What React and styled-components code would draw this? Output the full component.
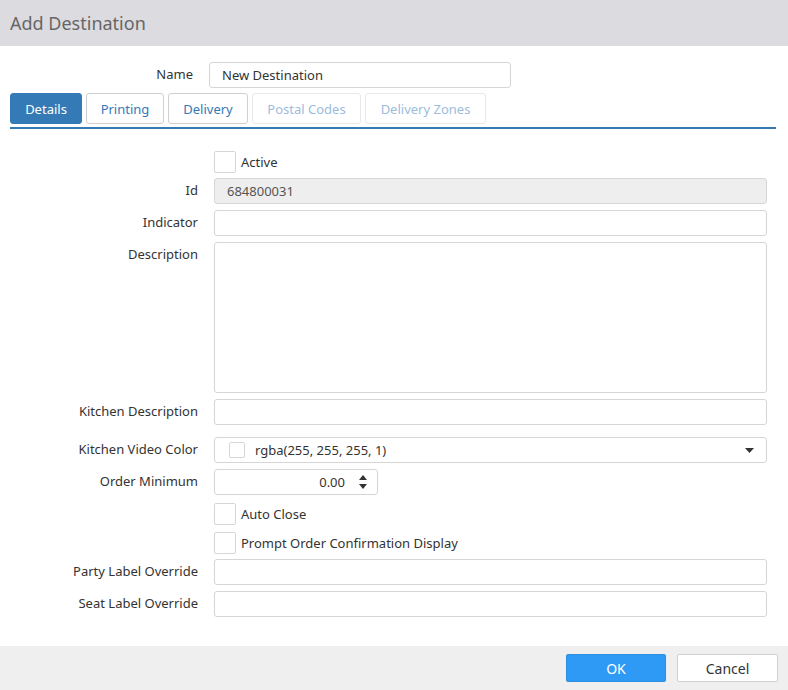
import React from 'react';
import styled, { createGlobalStyle } from 'styled-components';

const Global = createGlobalStyle`
  body { margin: 0; font-family: "Noto Sans", "Open Sans", sans-serif; background: #fff; }
`;

const Dialog = styled.div`
  width: 788px;
  height: 690px;
  display: flex;
  flex-direction: column;
  color: #333;
  font-size: 13px;
`;

const Header = styled.div`
  height: 46px;
  background: #dcdbe0;
  display: flex;
  align-items: center;
  padding-left: 10px;
  font-size: 18px;
  color: #666;
`;

const Body = styled.div`
  flex: 1;
  padding: 16px 12px 0 10px;
`;

const NameRow = styled.div`
  display: flex;
  align-items: flex-start;
  gap: 16px;
`;

const NameLabel = styled.div`
  width: 183px;
  text-align: right;
  padding-top: 3px;
`;

const Input = styled.div`
  box-sizing: border-box;
  height: ${p => p.$h || 26}px;
  width: ${p => p.$w ? p.$w + 'px' : '100%'};
  border: 1px solid #d6d6d6;
  border-radius: 3px;
  background: ${p => p.$disabled ? '#eeeeee' : '#fff'};
  color: ${p => p.$disabled ? '#555' : '#333'};
  display: flex;
  align-items: center;
  padding: 0 12px;
  gap: 10px;
`;

const Tabs = styled.div`
  display: flex;
  gap: 4px;
  margin-top: 5px;
  padding-bottom: 3px;
  border-bottom: 2px solid #337ab7;
  width: 766px;
`;

const Tab = styled.div`
  box-sizing: border-box;
  height: 31px;
  width: ${p => p.$w}px;
  display: flex;
  align-items: center;
  justify-content: center;
  border-radius: 3px;
  border: 1px solid ${p => p.$active ? '#337ab7' : p.$disabled ? '#e8e8e8' : '#d0d0d0'};
  background: ${p => p.$active ? '#337ab7' : '#fff'};
  color: ${p => p.$active ? '#fff' : p.$disabled ? '#9dbcdc' : '#337ab7'};
`;

const Form = styled.div`
  display: grid;
  grid-template-columns: 188px 553px;
  column-gap: 16px;
  row-gap: 6px;
  padding-top: 22px;
`;

const Label = styled.div`
  text-align: right;
  padding-top: ${p => p.$pt ?? 3}px;
  margin-top: ${p => p.$mt || 0}px;
`;

const Field = styled.div`
  margin-top: ${p => p.$mt || 0}px;
`;

const CheckRow = styled.label`
  display: flex;
  align-items: center;
  gap: 5px;
  height: 22px;
`;

const Box = styled.span`
  box-sizing: border-box;
  width: ${p => p.$s || 22}px;
  height: ${p => p.$s || 22}px;
  border: 1px solid #d6d6d6;
  border-radius: 2px;
  background: #fff;
  flex-shrink: 0;
`;

const Spin = styled.div`
  margin-left: auto;
  display: flex;
  flex-direction: column;
  gap: 4px;
  margin-right: -2px;
`;

const Footer = styled.div`
  height: 44px;
  background: #efefef;
  display: flex;
  justify-content: flex-end;
  align-items: center;
  gap: 11px;
  padding-right: 10px;
`;

const Button = styled.button`
  width: ${p => p.$w}px;
  height: 28px;
  font-family: inherit;
  font-size: 14px;
  border-radius: 2px;
  border: 1px solid ${p => p.$primary ? '#2b8de0' : '#d0d0d0'};
  background: ${p => p.$primary ? '#2f9af5' : '#fff'};
  color: ${p => p.$primary ? '#fff' : '#333'};
`;

const Tri = ({ up }) => (
  <svg width="8" height="5" viewBox="0 0 8 5">
    <path d={up ? 'M0 5 L4 0 L8 5 Z' : 'M0 0 L4 5 L8 0 Z'} fill="#333" />
  </svg>
);

export default function App() {
  return (
    <Dialog>
      <Global />
      <Header>Add Destination</Header>
      <Body>
        <NameRow>
          <NameLabel>Name</NameLabel>
          <Input $w={302}>New Destination</Input>
        </NameRow>
        <Tabs>
          <Tab $w={72} $active>Details</Tab>
          <Tab $w={78}>Printing</Tab>
          <Tab $w={80}>Delivery</Tab>
          <Tab $w={109} $disabled>Postal Codes</Tab>
          <Tab $w={121} $disabled>Delivery Zones</Tab>
        </Tabs>
        <Form>
          <div />
          <Field><CheckRow><Box />Active</CheckRow></Field>
          <Label $mt={-1}>Id</Label>
          <Field $mt={-1}><Input $disabled>684800031</Input></Field>
          <Label>Indicator</Label>
          <Field><Input /></Field>
          <Label>Description</Label>
          <Field><Input $h={151} /></Field>
          <Label>Kitchen Description</Label>
          <Field><Input /></Field>
          <Label $mt={6}>Kitchen Video Color</Label>
          <Field $mt={6}>
            <Input>
              <Box $s={16} style={{ marginLeft: 2 }} />
              rgba(255, 255, 255, 1)
              <svg width="9" height="5" viewBox="0 0 9 5" style={{ marginLeft: 'auto', marginRight: 0 }}>
                <path d="M0 0 L4.5 5 L9 0 Z" fill="#333" />
              </svg>
            </Input>
          </Field>
          <Label>Order Minimum</Label>
          <Field>
            <Input $w={164} style={{ justifyContent: 'flex-end' }}>
              0.00
              <Spin style={{ marginLeft: 4 }}><Tri up /><Tri /></Spin>
            </Input>
          </Field>
          <div />
          <Field $mt={2}><CheckRow><Box />Auto Close</CheckRow></Field>
          <div />
          <Field $mt={1}><CheckRow><Box />Prompt Order Confirmation Display</CheckRow></Field>
          <Label $mt={-1}>Party Label Override</Label>
          <Field $mt={-1}><Input /></Field>
          <Label>Seat Label Override</Label>
          <Field><Input /></Field>
        </Form>
      </Body>
      <Footer>
        <Button $primary $w={100}>OK</Button>
        <Button $w={101}>Cancel</Button>
      </Footer>
    </Dialog>
  );
}
